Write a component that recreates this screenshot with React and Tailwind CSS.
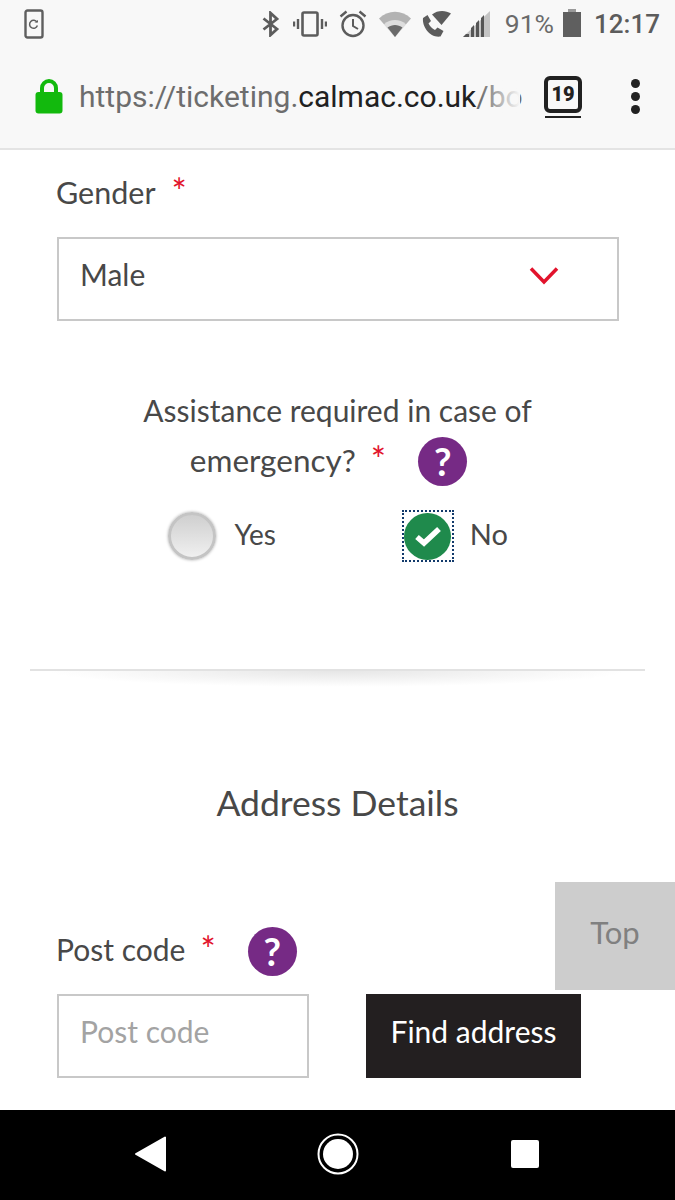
import React from 'react';

// --- status bar glyphs ---
const ScreenshotIcon = () => (
    <svg width="20" height="30" viewBox="0 0 20 30" fill="none" stroke="#5f5f5f">
        <rect x="1.5" y="1.5" width="17" height="27" rx="2" strokeWidth="2.4" />
        <path d="M13 13.2a4 4 0 1 0 .4 3.4" strokeWidth="1.5" />
        <path d="M10.5 13.5h3.5v-2.5z" fill="#5f5f5f" stroke="none" />
    </svg>
);

const BluetoothIcon = () => (
    <svg width="20" height="26" viewBox="0 0 20 26" fill="none" stroke="#5c5c5c" strokeWidth="2.8">
        <path d="M2.5 7.5 16 18l-6.5 6V2L16 8 2.5 18.5" />
    </svg>
);

const VibrateIcon = () => (
    <svg width="34" height="26" viewBox="0 0 34 26" fill="none" stroke="#5c5c5c">
        <rect x="9.5" y="1.5" width="15" height="23" rx="1.5" strokeWidth="2.6" />
        <path d="M5 8v10M1 10.5v5M29 8v10M33 10.5v5" strokeWidth="2.4" />
    </svg>
);

const AlarmIcon = () => (
    <svg width="28" height="28" viewBox="0 0 28 28" fill="none" stroke="#5c5c5c" strokeWidth="2.4">
        <circle cx="14" cy="15.5" r="10.5" />
        <path d="M14 9v7l5 3" strokeWidth="2" />
        <path d="M1.5 6.5 7.5 1.5M26.5 6.5l-6-5" />
    </svg>
);

const WifiIcon = () => (
    <svg width="32" height="26" viewBox="0 0 32 26">
        <path d="M0 7.5C9-1.5 23-1.5 32 7.5L16 26z" fill="#b3b3b3" />
        <path d="M5 13.2c6.500-5.500 15.500-5.500 22 0L16 26z" fill="#fff" opacity="0.55" />
        <path d="M8.500 16.500c4.500-3.500 10.500-3.500 15 0L16 26z" fill="#6a6a6a" />
    </svg>
);

const CallIcon = () => (
    <svg width="31" height="28" viewBox="0 0 31 28">
        <path d="M11 4.500C16.500 0 24.500 0 30 3.500L20.500 15z" fill="#5c5c5c" />
        <path d="M2 8 6.500 5l3.500 6-2.500 2.500c1.500 3 3.500 5 6.500 6.500L16.500 17.500l6 3.500-3 5.500C9 28 1 17 2 8z" fill="#5c5c5c" />
    </svg>
);

const SignalIcon = () => (
    <svg width="27" height="26" viewBox="0 0 27 26">
        <path d="M27 0v26H0z" fill="#c4c4c4" />
        <path d="M3 23h3v3H0zM8 17l3-3v12H8zM13 12l3-3v17h-3zM18 7l3-3v22h-3z" fill="#555" />
    </svg>
);

const TabCount = () => (
    <div className="flex flex-col items-center">
        <div className="w-[38px] h-[37px] border-[4px] border-[#212121] rounded-[6px] flex items-center justify-center text-[20px] font-black text-[#212121] leading-none font-['Roboto',sans-serif]">19</div>
        <div className="w-[36px] h-[2px] bg-[#212121] mt-[3px]" />
    </div>
);

// --- form bits ---
const HelpBadge = ({ className = '' }) => (
    <span className={`w-[49px] h-[49px] rounded-full bg-[#762a85] text-white flex items-center justify-center text-[38px] font-bold leading-none shrink-0 ${className}`}>?</span>
);

const Star = ({ className = '' }) => (
    <span className={`text-[#e2132c] text-[36px] leading-none relative -top-[2px] ${className}`}>*</span>
);

const App = () => (
    <div className="w-[675px] h-[1200px] flex flex-col bg-white overflow-hidden font-['Lato',sans-serif] text-[#484848]">
        {/* browser chrome */}
        <header className="h-[150px] shrink-0 bg-[#f8f8f8] border-b-2 border-[#e4e4e4] flex flex-col">
            <div className="h-[48px] flex items-center pl-[24px] pr-[15px]">
                <ScreenshotIcon />
                <div className="flex-1" />
                <BluetoothIcon />
                <div className="ml-[12px]"><VibrateIcon /></div>
                <div className="ml-[12px]"><AlarmIcon /></div>
                <div className="ml-[12px]"><WifiIcon /></div>
                <div className="ml-[10px]"><CallIcon /></div>
                <div className="ml-[11px]"><SignalIcon /></div>
                <span className="ml-[15px] text-[26.5px] text-[#6a6a6a] font-['Roboto',sans-serif] leading-none">91%</span>
                <div className="ml-[9px] w-[18px] h-[25px] bg-[#5f5f5f] relative">
                    <div className="absolute -top-[3px] left-[5px] w-[8px] h-[3px] bg-[#9a9a9a]" />
                </div>
                <span className="ml-[13px] text-[26px] font-medium text-[#5c5c5c] font-['Roboto',sans-serif] leading-none">12:17</span>
            </div>
            <div className="flex items-center h-[98px] pl-[35px] pb-[1px]">
                <svg width="28" height="35" viewBox="0 0 28 35" className="shrink-0">
                    <path d="M7 15V9a7 7 0 0 1 14 0v6" fill="none" stroke="#12b90d" strokeWidth="4" />
                    <rect x="0.500" y="13" width="27" height="21.500" rx="3" fill="#12b90d" />
                </svg>
                <div className="relative ml-[16px] w-[441px] whitespace-nowrap text-[30px] leading-[36px] font-['Roboto',sans-serif] text-[#6d6d6d]">
                    https://ticketing.<span className="text-[#212121]">calmac.co.uk</span>/bo
                    <div className="absolute right-0 top-0 bottom-0 w-[40px] bg-gradient-to-r from-transparent to-[#f8f8f8]" />
                </div>
                <div className="ml-[24px]"><TabCount /></div>
                <div className="ml-[49px] flex flex-col gap-[4px]">
                    <span className="w-[9px] h-[9px] rounded-full bg-[#212121]" />
                    <span className="w-[9px] h-[9px] rounded-full bg-[#212121]" />
                    <span className="w-[9px] h-[9px] rounded-full bg-[#212121]" />
                </div>
            </div>
        </header>

        {/* page */}
        <main className="flex-1 relative overflow-hidden">
            <div className="pt-[23px] px-[57px]">
                <div className="flex items-center h-[40px] text-[30.5px] -ml-[1px]">Gender<Star className="ml-[16px]" /></div>
                <div className="mt-[24px] h-[84px] w-[562px] border-2 border-[#c8c8c8] flex items-center justify-between pl-[21px] pr-[58px] pb-[10px] text-[30px]">
                    <span>Male</span>
                    <svg width="30" height="20" viewBox="0 0 30 20" fill="none" stroke="#e2132c" strokeWidth="3.500" className="mt-[4px]"><path d="M2 2.500 15 16 28 2.500" /></svg>
                </div>
            </div>

            <div className="mt-[64px] flex flex-col items-center text-[30px]">
                <div className="h-[50px] flex items-center">Assistance required in case of</div>
                <div className="mt-[1px] h-[50px] flex items-center pr-[18px]">
                    <span className="text-[31.5px]">emergency?</span>
                    <Star className="ml-[15px]" />
                    <HelpBadge className="ml-[32px]" />
                </div>
                <div className="mt-[24px] flex items-center h-[52px] text-[28px] w-[340px]">
                    <span className="w-[48px] h-[48px] rounded-full border-[3px] border-[#c4c4c4] bg-gradient-to-b from-[#cfcfcf] to-[#f0f0f0] shadow-[0_0_3px_#aaaaaa] shrink-0" />
                    <span className="ml-[19px] pb-[4px]">Yes</span>
                    <span className="ml-[126px] w-[52px] h-[52px] border-2 border-dotted border-[#123a6b] flex items-center justify-center shrink-0">
                        <span className="w-[47px] h-[47px] rounded-full bg-[#1f8a4c] flex items-center justify-center">
                            <svg width="30" height="24" viewBox="0 0 30 24" fill="none" stroke="#ffffff" strokeWidth="5.500"><path d="M4 13l7 6L26 5" /></svg>
                        </span>
                    </span>
                    <span className="ml-[16px] pb-[4px] text-[29px]">No</span>
                </div>
            </div>

            {/* divider with soft shadow under it */}
            <div className="mt-[107px] mx-[30px] h-[2px] bg-[#e2e2e2]" />
            <div className="mx-[50px] h-[16px] bg-[radial-gradient(ellipse_50%_100%_at_50%_0%,#e6e6e6,#ffffff)]" />

            <h2 className="mt-[96px] text-center text-[35.5px] leading-[40px] font-normal">Address Details</h2>

            <div className="mt-[103px] px-[57px]">
                <div className="flex items-center h-[50px] text-[30px]">
                    <span className="pb-[4px] -ml-[1px]">Post code</span>
                    <Star className="ml-[15px]" />
                    <HelpBadge className="ml-[32px]" />
                </div>
                <div className="mt-[18px] flex gap-[57px]">
                    <div className="w-[252px] h-[84px] border-2 border-[#c8c8c8] flex items-center pl-[21px] pb-[9px] text-[30px] text-[#a3a3a3]">Post code</div>
                    <button className="w-[215px] h-[84px] bg-[#231f20] text-white text-[30px] pb-[9px]">Find address</button>
                </div>
            </div>

            <div className="absolute left-[555px] top-[732px] w-[120px] h-[108px] bg-[#cdcdcd] text-[#808080] text-[31px] flex items-center justify-center pb-[8px]">Top</div>
        </main>

        {/* android nav */}
        <nav className="h-[90px] shrink-0 bg-black flex items-center pl-[135px] pb-[2px]">
            <svg width="31" height="36" viewBox="0 0 31 36"><path d="M30 1.500v33L1 18z" fill="#fff" stroke="#fff" strokeWidth="2" strokeLinejoin="round" /></svg>
            <svg width="42" height="42" viewBox="0 0 42 42" className="ml-[151px]">
                <circle cx="21" cy="21" r="19.500" fill="none" stroke="#fff" strokeWidth="2" />
                <circle cx="21" cy="21" r="15" fill="#fff" />
            </svg>
            <div className="ml-[152px] w-[28px] h-[28px] bg-white rounded-[2px]" />
        </nav>
    </div>
);

export default App;
